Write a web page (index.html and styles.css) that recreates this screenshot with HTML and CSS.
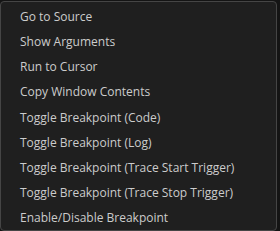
FILE: index.html
```html
<!DOCTYPE html>
<html>
<head>
<meta charset="utf-8">
<link rel="stylesheet" href="styles.css">
</head>
<body>
<div class="menu">
  <div class="item">Go to Source</div>
  <div class="item">Show Arguments</div>
  <div class="item">Run to Cursor</div>
  <div class="item">Copy Window Contents</div>
  <div class="item">Toggle Breakpoint (Code)</div>
  <div class="item">Toggle Breakpoint (Log)</div>
  <div class="item">Toggle Breakpoint (Trace Start Trigger)</div>
  <div class="item">Toggle Breakpoint (Trace Stop Trigger)</div>
  <div class="item">Enable/Disable Breakpoint</div>
</div>
</body>
</html>
```
FILE: styles.css
```css
html, body {
  margin: 0;
  padding: 0;
  background: #141414;
  width: 280px;
  height: 231px;
  overflow: hidden;
}
.menu {
  box-sizing: border-box;
  width: 277px;
  height: 230px;
  margin-top: 1px;
  background: #1f1f1f;
  border: 1px solid #454545;
  border-radius: 4px;
  padding: 2px 0 0;
  font-family: "Open Sans", "Noto Sans", sans-serif;
  font-size: 12px;
  color: #cccccc;
}
.item {
  height: 25.125px;
  line-height: 25px;
  padding-left: 19px;
  white-space: nowrap;
}
```
